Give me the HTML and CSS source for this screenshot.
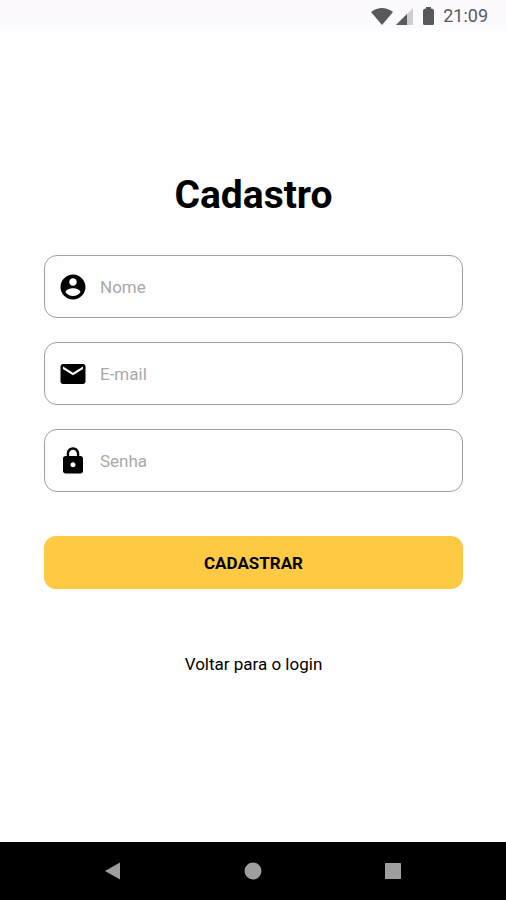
FILE: index.html
```html
<!DOCTYPE html>
<html lang="pt-BR">
<head>
  <meta charset="utf-8">
  <meta name="viewport" content="width=device-width, initial-scale=1">
  <title>Cadastro</title>
  <link rel="stylesheet" href="styles.css">
</head>
<body>
  <header class="status-bar">
    <svg class="status-wifi" viewBox="0 0 22 17" aria-hidden="true"><path d="M0 4Q11-4 22 4L11 17Z"/></svg>
    <svg class="status-signal" viewBox="0 0 17 17" aria-hidden="true"><path class="signal-empty" d="M17 0V17H0Z"/><path d="M11 6V17H0Z"/></svg>
    <svg class="status-battery" viewBox="0 0 11 18" aria-hidden="true"><path d="M3 0H8V1.500Q11 1.500 11 4V16.500Q11 18 9.500 18H1.500Q0 18 0 16.500V4Q0 1.500 3 1.500Z"/></svg>
    <time>21:09</time>
  </header>

  <main class="screen">
    <h1 class="title">Cadastro</h1>
    <form class="form">
      <label class="field">
        <svg class="field-icon" viewBox="0 0 24 24" aria-hidden="true"><path d="M12 2C6.480 2 2 6.480 2 12s4.480 10 10 10 10-4.480 10-10S17.520 2 12 2zm0 3c1.660 0 3 1.340 3 3s-1.340 3-3 3-3-1.340-3-3 1.340-3 3-3zm0 14.200c-2.500 0-4.710-1.280-6-3.220.03-1.990 4-3.080 6-3.080 1.990 0 5.970 1.090 6 3.080-1.290 1.940-3.500 3.220-6 3.220z"/></svg>
        <input class="field-input" type="text" placeholder="Nome" aria-label="Nome">
      </label>
      <label class="field">
        <svg class="field-icon" viewBox="0 0 24 24" aria-hidden="true"><path d="M20 4H4c-1.100 0-1.990.9-1.990 2L2 18c0 1.100.9 2 2 2h16c1.100 0 2-.9 2-2V6c0-1.100-.9-2-2-2zm0 4l-8 5-8-5V6l8 5 8-5v2z"/></svg>
        <input class="field-input" type="email" placeholder="E-mail" aria-label="E-mail">
      </label>
      <label class="field">
        <svg class="field-icon" viewBox="0 0 24 24" aria-hidden="true"><path d="M18 8h-1V6c0-2.760-2.240-5-5-5S7 3.240 7 6v2H6c-1.100 0-2 .9-2 2v10c0 1.100.9 2 2 2h12c1.100 0 2-.9 2-2V10c0-1.100-.9-2-2-2zm-6 9c-1.100 0-2-.9-2-2s.9-2 2-2 2 .9 2 2-.9 2-2 2zm3.100-9H8.900V6c0-1.710 1.390-3.100 3.100-3.100s3.100 1.390 3.100 3.100v2z"/></svg>
        <input class="field-input" type="password" placeholder="Senha" aria-label="Senha">
      </label>
      <button class="submit" type="submit">CADASTRAR</button>
    </form>
    <a class="back-link" href="#login">Voltar para o login</a>
  </main>

  <nav class="nav-bar" aria-label="Sistema">
    <button class="nav-button" type="button" aria-label="Voltar"><svg class="nav-icon" viewBox="0 0 18 18" aria-hidden="true"><path d="M1 9L16 0.500V17.500Z"/></svg></button>
    <button class="nav-button" type="button" aria-label="Início"><svg class="nav-icon" viewBox="0 0 18 18" aria-hidden="true"><circle cx="9" cy="9" r="8.500"/></svg></button>
    <button class="nav-button" type="button" aria-label="Recentes"><svg class="nav-icon" viewBox="0 0 18 18" aria-hidden="true"><rect x="1" y="1" width="16" height="16" rx="0.500"/></svg></button>
  </nav>
</body>
</html>
```

FILE: styles.css
```css
* {
  box-sizing: border-box;
}

body {
  margin: 0;
  min-height: 100vh;
  display: flex;
  flex-direction: column;
  background: #fefefe;
  color: #000;
  font-family: Roboto, "Liberation Sans", sans-serif;
}

.status-bar {
  display: flex;
  align-items: center;
  justify-content: flex-end;
  height: 28px;
  padding: 4px 18px 0 0;
  background: #fdfaff;
  color: #59595c;
  font-size: 18px;
  line-height: 24px;
}

.status-bar svg {
  fill: #59595c;
}

.status-wifi {
  width: 22px;
  height: 17px;
  margin-right: 3px;
}

.status-signal {
  width: 17px;
  height: 17px;
  margin-right: 10px;
}

.status-bar .signal-empty {
  fill: #cfcdd1;
}

.status-battery {
  width: 11px;
  height: 18px;
  margin-right: 9px;
}

.screen {
  flex: 1;
  display: flex;
  flex-direction: column;
  align-items: center;
  justify-content: center;
  padding: 0 43px 23px 44px;
}

.title {
  margin: 0 0 36px;
  font-size: 39px;
  line-height: 48px;
  font-weight: 700;
}

.form {
  display: flex;
  flex-direction: column;
  gap: 24px;
  width: 100%;
}

.field {
  display: flex;
  align-items: center;
  gap: 12px;
  height: 63px;
  padding: 0 13px;
  border: 1px solid #a0a0a0;
  border-radius: 13px;
}

.field-icon {
  flex: none;
  width: 30px;
  height: 30px;
}

.field-input {
  flex: 1;
  min-width: 0;
  padding: 0;
  border: 0;
  outline: 0;
  background: transparent;
  color: #000;
  font: inherit;
  font-size: 17px;
  line-height: 24px;
}

.field-input::placeholder {
  color: #a9a9a9;
}

.submit {
  height: 53px;
  margin-top: 20px;
  border: 0;
  border-radius: 12px;
  background: #ffca43;
  color: #000;
  font: inherit;
  font-size: 17px;
  font-weight: 700;
}

.back-link {
  margin-top: 63px;
  color: #000;
  font-size: 17px;
  line-height: 24px;
  text-decoration: none;
}

.nav-bar {
  display: flex;
  justify-content: center;
  gap: 92px;
  height: 58px;
  background: #000;
}

.nav-button {
  display: flex;
  align-items: center;
  justify-content: center;
  width: 48px;
  padding: 0;
  border: 0;
  background: transparent;
}

.nav-icon {
  width: 18px;
  height: 18px;
  fill: #9e9e9e;
}
```
